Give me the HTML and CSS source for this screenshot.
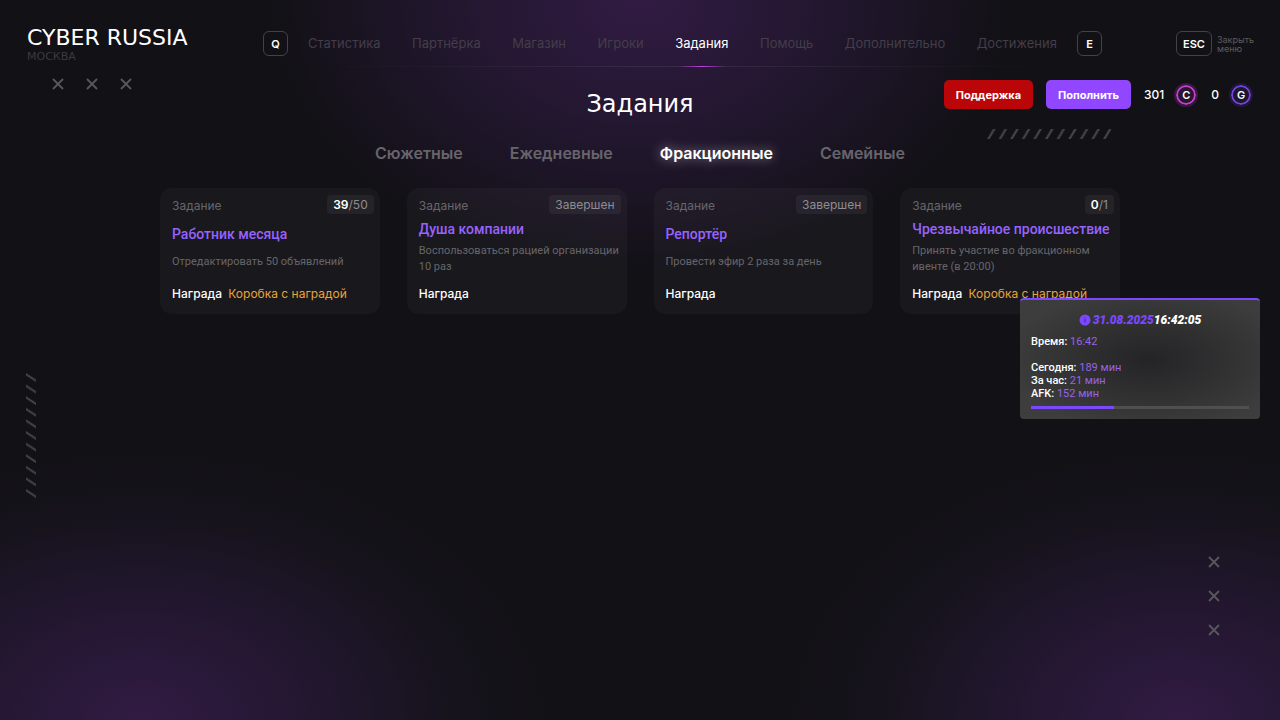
FILE: index.html
```html
<!DOCTYPE html>
<html lang="ru">
<head>
<meta charset="utf-8">
<meta name="viewport" content="width=device-width, initial-scale=1">
<title>Cyber Russia — Задания</title>
<link rel="stylesheet" href="styles.css">
</head>
<body>
<svg class="defs" width="0" height="0" aria-hidden="true">
  <symbol id="cross" viewBox="0 0 12 12"><path d="M1 1l10 10M11 1L1 11" fill="none" stroke="currentColor" stroke-width="1.800"/></symbol>
</svg>
<header class="topbar">
  <div class="brand">
    <div class="brand-name">CYBER RUSSIA</div>
    <div class="brand-server">МОСКВА</div>
  </div>
  <nav class="nav">
    <button class="key" type="button">Q</button>
    <ul class="nav-list">
      <li><a class="nav-link" href="#">Статистика</a></li>
      <li><a class="nav-link" href="#">Партнёрка</a></li>
      <li><a class="nav-link" href="#">Магазин</a></li>
      <li><a class="nav-link" href="#">Игроки</a></li>
      <li><a class="nav-link active" href="#" aria-current="page">Задания</a></li>
      <li><a class="nav-link" href="#">Помощь</a></li>
      <li><a class="nav-link" href="#">Дополнительно</a></li>
      <li><a class="nav-link" href="#">Достижения</a></li>
    </ul>
    <button class="key" type="button">E</button>
  </nav>
  <div class="close">
    <button class="key key-wide" type="button" aria-labelledby="close-text">ESC</button>
    <span class="close-text" id="close-text">Закрыть<br>меню</span>
  </div>
</header>

<main>
  <section class="heading">
    <h1 class="title">Задания</h1>
    <div class="account">
      <button class="btn btn-support" type="button">Поддержка</button>
      <button class="btn btn-topup" type="button">Пополнить</button>
      <span class="balance">301 <span class="coin coin-c">C</span></span>
      <span class="balance">0 <span class="coin coin-g">G</span></span>
    </div>
  </section>

  <div class="tabs">
    <button class="tab" type="button">Сюжетные</button>
    <button class="tab" type="button">Ежедневные</button>
    <button class="tab selected" type="button">Фракционные</button>
    <button class="tab" type="button">Семейные</button>
  </div>

  <section class="cards">
    <article class="card">
      <div class="card-head"><span class="label">Задание</span><span class="badge"><b>39</b>/50</span></div>
      <div class="card-body">
        <h2 class="card-title">Работник месяца</h2>
        <p class="card-text">Отредактировать 50 объявлений</p>
      </div>
      <div class="reward">Награда <span class="prize">Коробка с наградой</span></div>
    </article>
    <article class="card">
      <div class="card-head"><span class="label">Задание</span><span class="badge">Завершен</span></div>
      <div class="card-body">
        <h2 class="card-title">Душа компании</h2>
        <p class="card-text">Воспользоваться рацией организации 10 раз</p>
      </div>
      <div class="reward">Награда</div>
    </article>
    <article class="card">
      <div class="card-head"><span class="label">Задание</span><span class="badge">Завершен</span></div>
      <div class="card-body">
        <h2 class="card-title">Репортёр</h2>
        <p class="card-text">Провести эфир 2 раза за день</p>
      </div>
      <div class="reward">Награда</div>
    </article>
    <article class="card">
      <div class="card-head"><span class="label">Задание</span><span class="badge"><b>0</b>/1</span></div>
      <div class="card-body">
        <h2 class="card-title">Чрезвычайное происшествие</h2>
        <p class="card-text">Принять участие во фракционном ивенте (в 20:00)</p>
      </div>
      <div class="reward">Награда <span class="prize">Коробка с наградой</span></div>
    </article>
  </section>
</main>

<aside class="notice">
  <div class="notice-head">
    <svg class="info" viewBox="0 0 12 12" aria-hidden="true"><circle cx="6" cy="6" r="5.5" fill="#7c48ff"/><path d="M6 3.2v1M6 5v3.6" stroke="#4a2a9e" stroke-width="1.2"/></svg>
    <span class="date">31.08.2025</span><span class="time">16:42:05</span>
  </div>
  <p class="stat">Время: <span>16:42</span></p>
  <div class="stats">
    <p class="stat">Сегодня: <span>189 мин</span></p>
    <p class="stat">За час: <span>21 мин</span></p>
    <p class="stat">AFK: <span>152 мин</span></p>
  </div>
  <div class="meter"><div class="meter-fill" style="width:38%"></div></div>
</aside>

<div class="crosses crosses-row" aria-hidden="true">
  <svg><use href="#cross"/></svg><svg><use href="#cross"/></svg><svg><use href="#cross"/></svg>
</div>
<div class="crosses crosses-col" aria-hidden="true">
  <svg><use href="#cross"/></svg><svg><use href="#cross"/></svg><svg><use href="#cross"/></svg>
</div>
<svg class="hatch hatch-row" viewBox="0 0 124 10" aria-hidden="true">
  <defs><pattern id="hr" width="11.6" height="10" patternUnits="userSpaceOnUse"><path d="M0 10L6 0H8.600L2.600 10Z" fill="#444347"/></pattern></defs>
  <rect width="124" height="10" fill="url(#hr)"/>
</svg>
<svg class="hatch hatch-col" viewBox="0 0 10 126" aria-hidden="true">
  <defs><pattern id="hc" width="10" height="11.6" patternUnits="userSpaceOnUse"><path d="M0 0L10 6.500V9L0 2.500Z" fill="#434247"/></pattern></defs>
  <rect width="10" height="126" fill="url(#hc)"/>
</svg>
</body>
</html>
```

FILE: styles.css
```css
* { box-sizing: border-box; }

body {
  position: relative;
  margin: 0;
  min-height: 100vh;
  color: #fff;
  font-family: Inter, "Open Sans", sans-serif;
  font-size: 12px;
  line-height: 16px;
  background:
    radial-gradient(ellipse 370px 270px at 50% 0, #311b43 0%, #231730 48%, rgba(18, 17, 22, 0) 100%),
    radial-gradient(ellipse 410px 270px at 11% 100%, #311b43 0%, #20162c 50%, #16131c 76%, rgba(18, 17, 22, 0) 100%),
    radial-gradient(ellipse 390px 270px at 92% 100%, #311b43 0%, #20162c 50%, #16131c 76%, rgba(18, 17, 22, 0) 100%),
    #121116;
}

h1, h2, p, ul { margin: 0; padding: 0; font-weight: inherit; }
button { margin: 0; padding: 0; border: 0; background: none; color: inherit; font: inherit; cursor: pointer; }
.defs { position: absolute; }

/* Top bar */
.topbar {
  display: grid;
  grid-template-columns: 236px 1fr 152px;
  padding: 26px 26px 0 27px;
}
.brand, .title { font-family: "DejaVu Sans", sans-serif; }
.brand-name { font-size: 22px; line-height: 24px; white-space: nowrap; }
.brand-server { font-size: 11px; line-height: 14px; color: #3b3a3f; }

.nav {
  display: flex;
  align-items: flex-start;
  padding-top: 5px;
  height: 41px;
  background: linear-gradient(90deg, transparent 5%, rgba(255, 255, 255, .08) 50%, transparent 95%) bottom / 100% 1px no-repeat;
}
.nav-list {
  flex: 1;
  display: flex;
  justify-content: space-between;
  margin: 0 20px;
  list-style: none;
}
.nav-link {
  display: block;
  height: 36px;
  font-size: 13px;
  line-height: 24px;
  color: #433e49;
  text-decoration: none;
}
.nav-link.active {
  color: #fff;
  background: linear-gradient(90deg, transparent 5%, #c03fe0 50%, transparent 95%) bottom / 100% 1px no-repeat;
}
.key {
  width: 25px;
  height: 25px;
  border: 1px solid #434247;
  border-radius: 6px;
  font-size: 11px;
  font-weight: 600;
}
.key-wide { width: 36px; }
.close { display: flex; justify-content: flex-end; gap: 5px; padding-top: 5px; }
.close-text { padding-top: 4px; font-size: 9px; line-height: 9px; color: #5d5c60; }

/* Heading */
.heading {
  display: grid;
  grid-template-columns: 1fr auto 1fr;
  align-items: start;
  padding: 13px 27px 0;
}
.title { grid-column: 2; font-size: 24px; line-height: 48px; }
.account { display: flex; align-items: center; justify-content: flex-end; gap: 13px; }
.btn { height: 29px; padding: 0 12px; border-radius: 5px; font-size: 11px; font-weight: 700; }
.btn-support { background: #ba0509; }
.btn-topup { background: #9047ff; }
.balance { display: flex; align-items: center; gap: 10px; font-weight: 500; }
.coin {
  width: 24px;
  height: 24px;
  border-radius: 50%;
  line-height: 20px;
  text-align: center;
  font-size: 11px;
  font-weight: 600;
  border: 2px solid;
  background-clip: padding-box;
}
.coin-c { border-color: #3b1843; box-shadow: inset 0 0 0 2px #c540d0; background-color: #29162f; }
.coin-g { border-color: #221740; box-shadow: inset 0 0 0 2px #7445d8; background-color: #1d1630; }

/* Tabs */
.tabs { display: flex; justify-content: center; gap: 47px; margin-top: 13px; }
.tab { font-size: 16px; line-height: 24px; font-weight: 600; color: #67646c; }
.tab.selected { color: #fff; text-shadow: 0 0 12px rgba(255, 255, 255, .5); }

/* Task cards */
.cards {
  display: grid;
  grid-template-columns: repeat(4, 1fr);
  gap: 27px;
  width: 75%;
  margin: 23px auto 0;
}
.card {
  padding: 7px 6px 12px 12px;
  border-radius: 12px;
  background: rgba(255, 255, 255, .03);
}
.card-head { display: flex; align-items: flex-end; justify-content: space-between; }
.label { color: #67666a; }
.badge {
  padding: 0 6px;
  border-radius: 4px;
  line-height: 19px;
  color: #8e8d91;
  background: rgba(255, 255, 255, .05);
}
.badge b { color: #fff; font-weight: 600; }
.card-body {
  display: flex;
  flex-direction: column;
  justify-content: space-evenly;
  min-height: 68px;
  margin-bottom: 4px;
}
.card-title, .card-text, .stat { font-family: Roboto, Inter, sans-serif; }
.card-title { font-size: 14px; font-weight: 500; color: #9763ff; }
.card-text { font-size: 11px; color: #67666a; }
.reward { font-weight: 500; }
.prize { margin-left: 3px; font-weight: 400; color: #e8a438; }

/* Time notice */
.notice {
  position: absolute;
  top: 298px;
  right: 20px;
  width: 240px;
  padding: 12px 11px 10px;
  border-top: 2px solid #7c48ff;
  border-radius: 4px;
  background: radial-gradient(ellipse 60% 60% at 54% 50%, #242427 0%, #303031 50%, #3d3d3d 100%);
  font-size: 11px;
}
.notice-head {
  display: flex;
  align-items: center;
  justify-content: center;
  margin-bottom: 7px;
  font-family: Roboto, sans-serif;
  font-size: 12px;
  font-style: italic;
  font-weight: 900;
}
.info { width: 12px; height: 12px; margin-right: 2px; }
.date { color: #7c48ff; }
.stat { line-height: 13px; font-weight: 500; }
.stat span { color: #9763e8; font-weight: 400; }
.stats { margin-top: 13px; }
.meter { height: 3px; margin-top: 6px; background: #4f4f50; }
.meter-fill { height: 3px; background: #7c48ff; }

/* Background ornaments */
.crosses { position: absolute; display: flex; gap: 22px; color: #58575c; }
.crosses svg { width: 12px; height: 12px; }
.crosses-row { top: 78px; left: 52px; }
.crosses-col { right: 60px; bottom: 84px; flex-direction: column; }
.hatch { position: absolute; }
.hatch-row { top: 129px; right: 169px; width: 124px; height: 10px; }
.hatch-col { top: 373px; left: 26px; width: 10px; height: 126px; }
```
